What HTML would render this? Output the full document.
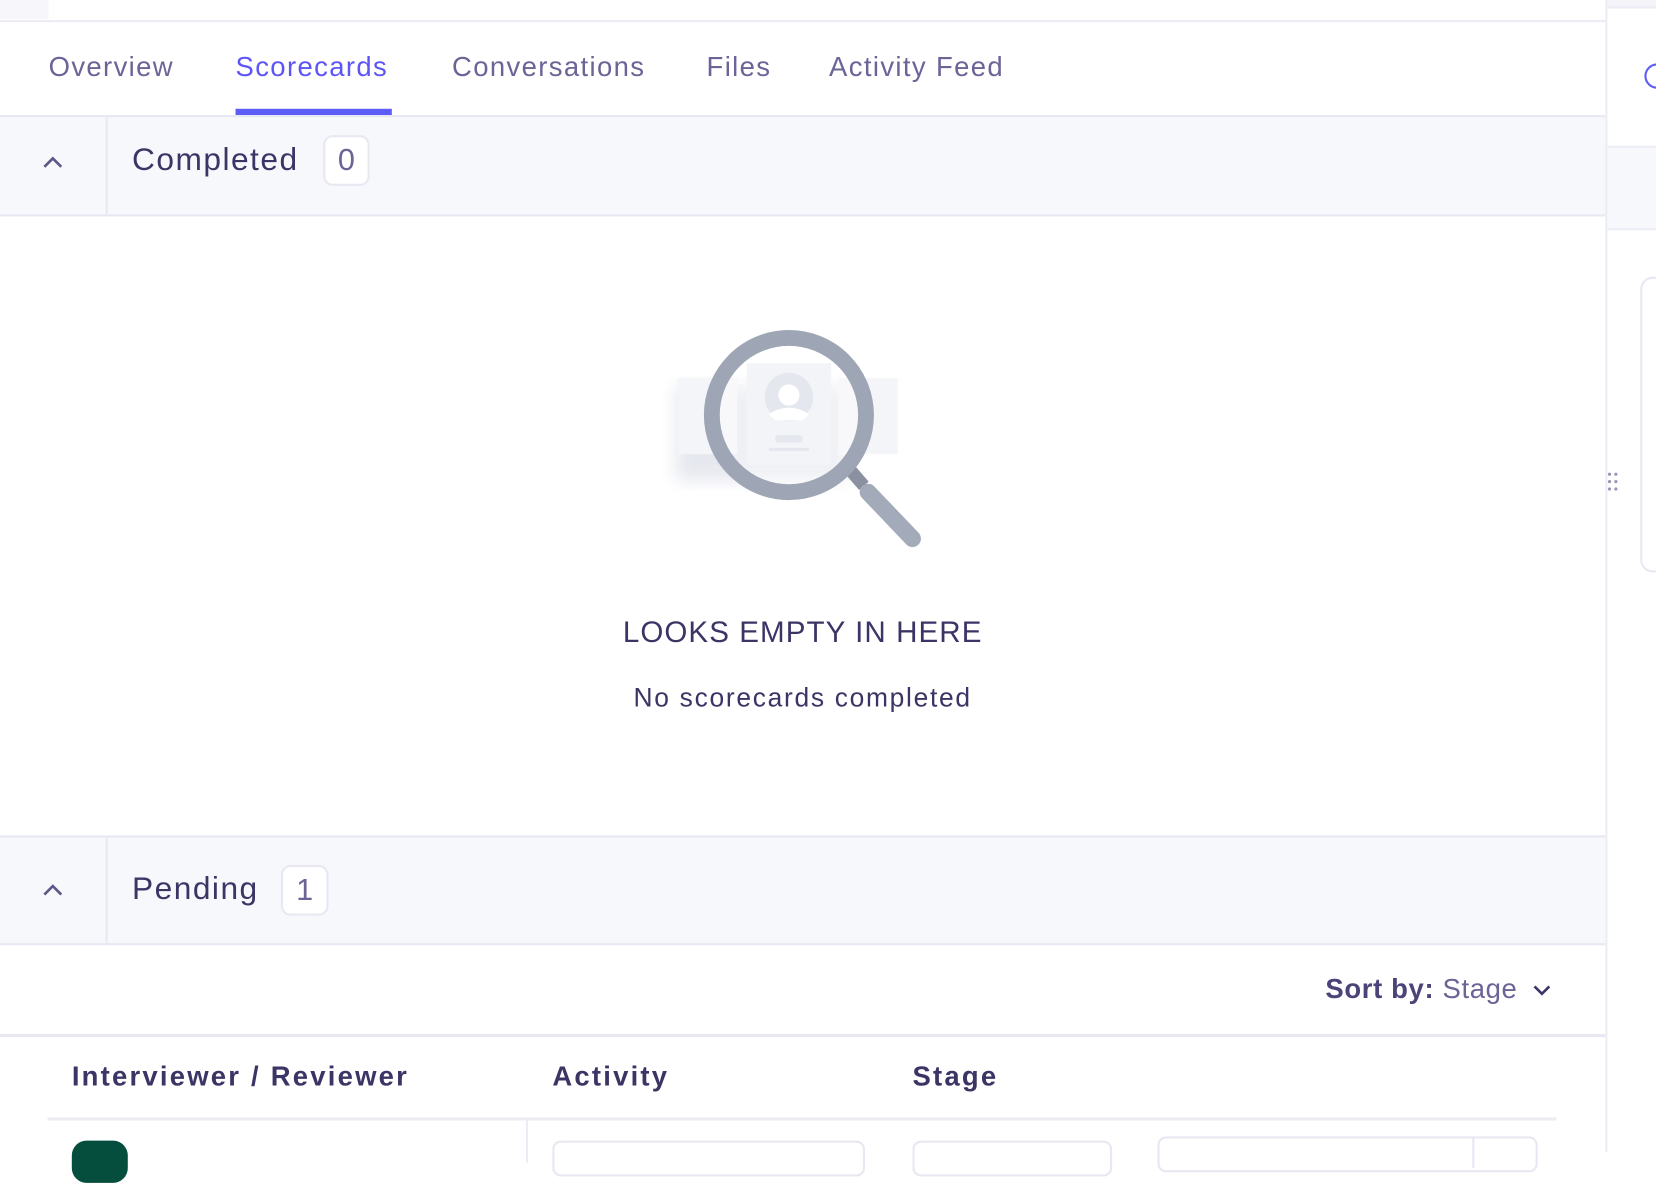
<!DOCTYPE html>
<html><head><style>
html,body{margin:0;padding:0;background:#fff;overflow:hidden;width:1656px;height:1152px}
#w{position:absolute;left:0;top:0;width:1568px;height:1091px;transform:scale(1.05612);transform-origin:0 0;font-family:"Liberation Sans",sans-serif;color:#3b3566}
.a{position:absolute}
.tab{position:absolute;top:48px;font-size:26px;color:#6a6497;letter-spacing:1.3px}
.hdr{position:absolute;left:0;width:1520px;background:#f7f8fc;border-top:2px solid #e8e8f3;border-bottom:2px solid #e8e8f3}
.badge{position:absolute;background:#fff;border:2px solid #e8e8f3;border-radius:9px;font-size:29px;color:#6a6497;text-align:center}
.th{position:absolute;top:1004px;font-size:26px;font-weight:bold;letter-spacing:2.1px;color:#3b3566}
</style></head><body><div id="w">
<div class="a" style="left:0;top:19px;width:1520px;height:2px;background:#ececf5"></div>
<div class="a" style="left:0;top:0;width:46px;height:18px;background:#f6f6fb"></div>
<div class="tab" style="left:46px">Overview</div>
<div class="tab" style="left:223px;color:#5d55f5">Scorecards</div>
<div class="tab" style="left:428px">Conversations</div>
<div class="tab" style="left:669px">Files</div>
<div class="tab" style="left:785px">Activity Feed</div>
<div class="a" style="left:223px;top:103px;width:148px;height:6px;background:#5d5cf7"></div>

<div class="hdr" style="top:109px;height:92px">
 <svg class="a" style="left:40px;top:36px" width="20" height="14"><path d="M2 11 L10 3 L18 11" fill="none" stroke="#5c5689" stroke-width="2.5"/></svg>
 <div class="a" style="left:100px;top:0;width:2px;height:92px;background:#e8e8f3"></div>
 <div class="a" style="left:125px;top:24px;font-size:30px;letter-spacing:1.4px">Completed</div>
 <div class="badge" style="left:306px;top:17px;width:40px;height:44px;line-height:44px">0</div>
</div>

<svg class="a" style="left:600px;top:300px" width="300" height="230">
 <defs><filter id="s"><feGaussianBlur stdDeviation="8"/></filter></defs>
 <rect x="40" y="65" width="160" height="90" fill="#e6e8ef" filter="url(#s)"/>
 <rect x="42" y="58" width="56" height="72" fill="#f4f5f8"/>
 <rect x="194" y="58" width="56" height="72" fill="#f4f5f8"/>
 <rect x="107" y="44" width="80" height="96" fill="#eceef3"/>
 <circle cx="147" cy="76" r="23" fill="#d8dbe5"/>
 <circle cx="147" cy="74" r="10" fill="#fff"/>
 <path d="M128 92 Q147 80 166 92 L160 98 L134 98Z" fill="#fff"/>
 <rect x="134" y="112" width="26" height="7" rx="3" fill="#d8dbe5"/>
 <rect x="128" y="124" width="38" height="3" fill="#d8dbe5"/>
 <line x1="205" y1="145" x2="218" y2="160" stroke="#8b91a1" stroke-width="12"/>
 <line x1="222" y1="166" x2="264" y2="210" stroke="#a3aab9" stroke-width="16" stroke-linecap="round"/>
 <circle cx="147" cy="93" r="73" fill="rgba(255,255,255,0.35)" stroke="#9ea6b6" stroke-width="15"/>
</svg>

<div class="a" style="left:0;width:1520px;top:583px;text-align:center;font-size:28px;letter-spacing:1px">LOOKS EMPTY IN HERE</div>
<div class="a" style="left:0;width:1520px;top:647px;text-align:center;font-size:25px;letter-spacing:1.6px">No scorecards completed</div>

<div class="hdr" style="top:791px;height:100px">
 <svg class="a" style="left:40px;top:43px" width="20" height="14"><path d="M2 11 L10 3 L18 11" fill="none" stroke="#5c5689" stroke-width="2.5"/></svg>
 <div class="a" style="left:100px;top:0;width:2px;height:100px;background:#e8e8f3"></div>
 <div class="a" style="left:125px;top:32px;font-size:30px;letter-spacing:1.4px">Pending</div>
 <div class="badge" style="left:266px;top:26px;width:41px;height:44px;line-height:44px">1</div>
</div>

<div class="a" style="left:1255px;top:921px;font-size:26px;letter-spacing:0.6px"><b style="color:#4a4478">Sort by:</b> <span style="color:#6a6497">Stage</span></div>
<svg class="a" style="left:1450px;top:930px" width="20" height="14"><path d="M3 4 L10 11 L17 4" fill="none" stroke="#3b3566" stroke-width="2.5"/></svg>
<div class="a" style="left:0;top:979px;width:1520px;height:3px;background:#e8e8f3"></div>
<div class="th" style="left:68px">Interviewer / Reviewer</div>
<div class="th" style="left:523px">Activity</div>
<div class="th" style="left:864px">Stage</div>
<div class="a" style="left:45px;top:1058px;width:1429px;height:3px;background:#ececf5"></div>
<div class="a" style="left:498px;top:1061px;width:2px;height:40px;background:#ececf5"></div>
<div class="a" style="left:68px;top:1080px;width:53px;height:40px;border-radius:14px;background:#054d3c"></div>
<div class="a" style="left:523px;top:1080px;width:292px;height:30px;border:2px solid #e8e8f3;border-radius:8px"></div>
<div class="a" style="left:864px;top:1080px;width:185px;height:30px;border:2px solid #e8e8f3;border-radius:8px"></div>
<div class="a" style="left:1096px;top:1076px;width:356px;height:30px;border:2px solid #e8e8f3;border-radius:8px"></div>
<div class="a" style="left:1394px;top:1076px;width:2px;height:30px;background:#e8e8f3"></div>

<div class="a" style="left:1520px;top:0;width:2px;height:1091px;background:#ececf5"></div>
<div class="a" style="left:1522px;top:0;width:46px;height:6px;background:#f3f3f8;border-bottom:2px solid #ececf5"></div>
<div class="a" style="left:1522px;top:138px;width:46px;height:76px;background:#f7f8fc;border-top:2px solid #ececf5;border-bottom:2px solid #ececf5"></div>
<div class="a" style="left:1557px;top:60px;width:20px;height:20px;border:2px solid #5d5cf7;border-radius:50%"></div>
<div class="a" style="left:1553px;top:262px;width:30px;height:276px;border:2px solid #e8e8f3;border-radius:12px"></div>
<svg class="a" style="left:1522px;top:446px" width="12" height="20"><g fill="#9a96b6"><circle cx="2" cy="3" r="1.5"/><circle cx="8" cy="3" r="1.5"/><circle cx="2" cy="10" r="1.5"/><circle cx="8" cy="10" r="1.5"/><circle cx="2" cy="17" r="1.5"/><circle cx="8" cy="17" r="1.5"/></g></svg>
</div></body></html>
